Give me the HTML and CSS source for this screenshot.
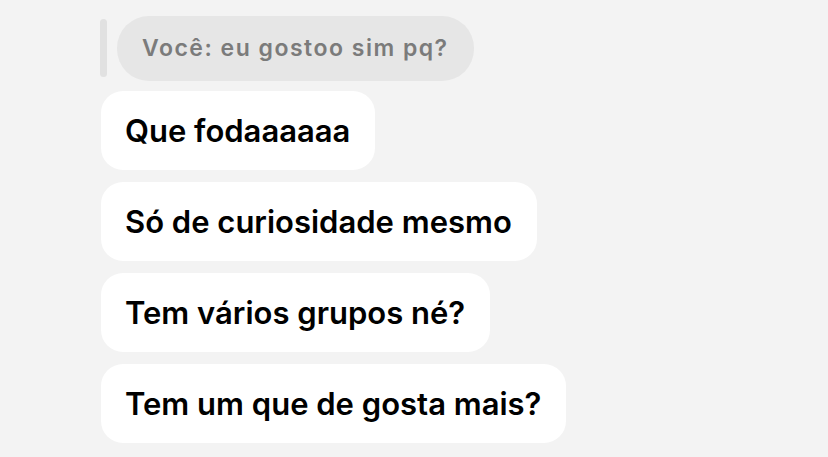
FILE: index.html
```html
<!DOCTYPE html>
<html lang="pt">
<head>
<meta charset="utf-8">
<link rel="stylesheet" href="styles.css">
</head>
<body>
<div class="thread">
  <div class="reply">
    <div class="reply-bar"></div>
    <div class="reply-bubble">Você: eu gostoo sim pq?</div>
  </div>
  <div class="messages">
    <div class="bubble">Que fodaaaaaa</div>
    <div class="bubble">Só de curiosidade mesmo</div>
    <div class="bubble">Tem vários grupos né?</div>
    <div class="bubble">Tem um que de gosta mais?</div>
  </div>
</div>
</body>
</html>
```
FILE: styles.css
```css
html, body {
  margin: 0;
  padding: 0;
  background: #f3f3f3;
}
body {
  font-family: Inter, "Noto Sans", sans-serif;
  width: 828px;
  height: 457px;
  overflow: hidden;
}
.thread {
  padding: 16px 0 0 100px;
  display: flex;
  flex-direction: column;
  align-items: flex-start;
}
.reply {
  display: flex;
  align-items: stretch;
  gap: 10px;
}
.reply-bar {
  width: 7px;
  margin: 3px 0 4px;
  border-radius: 4px;
  background: #e1e1e1;
}
.reply-bubble {
  background: #e6e6e6;
  color: #7b7b7b;
  font-size: 23px;
  font-weight: 600;
  letter-spacing: 1.5px;
  height: 65px;
  line-height: 65px;
  padding: 0 25px 0 25px;
  border-radius: 32px;
  box-sizing: border-box;
}
.messages {
  margin-top: 10px;
  display: flex;
  flex-direction: column;
  align-items: flex-start;
  gap: 12px;
}
.bubble {
  margin-left: 1px;
  background: #ffffff;
  color: #000;
  font-size: 31px;
  font-weight: 600;
  letter-spacing: 0;
  height: 79px;
  line-height: 79px;
  padding: 0 25px 0 24px;
  border-radius: 22px;
  box-sizing: border-box;
}
```
